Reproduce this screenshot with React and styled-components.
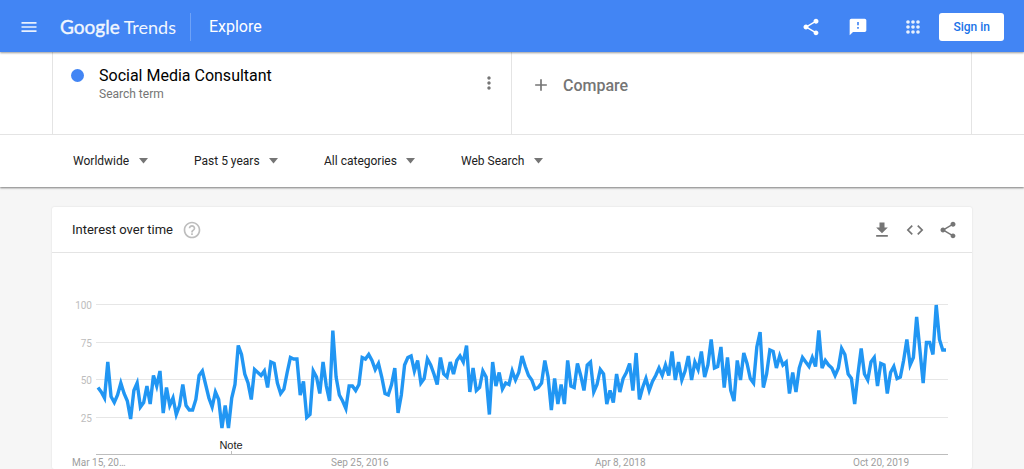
import React from 'react';
import styled, { createGlobalStyle } from 'styled-components';
import {
  MdAdd,
  MdCode,
  MdFeedback,
  MdFileDownload,
  MdHelpOutline,
  MdMenu,
  MdMoreVert,
  MdShare,
} from 'react-icons/md';

const GlobalStyle = createGlobalStyle`
  * {
    box-sizing: border-box;
  }
  body {
    margin: 0;
    background: #f6f6f6;
    color: #212121;
    font-family: Roboto, 'Liberation Sans', sans-serif;
  }
  button, select {
    font-family: inherit;
  }
`;

const Header = styled.header`
  position: relative;
  display: flex;
  align-items: center;
  height: 52px;
  padding: 2px 20px 0 19px;
  background: #4285f4;
  box-shadow: 0 1px 2px rgba(0, 0, 0, 0.4);
  color: #fff;
`;

const IconButton = styled.button`
  display: flex;
  padding: 0;
  border: 0;
  background: none;
  color: ${(props) => props.$color || '#757575'};
  font-size: 20px;
  cursor: pointer;
`;

const Logo = styled.a`
  display: flex;
  align-items: baseline;
  gap: 4px;
  margin-left: 21px;
  color: #f1f6fe;
  font-family: Lato, sans-serif;
  font-size: 18px;
  line-height: 28px;
  text-decoration: none;
`;

const LogoBrand = styled.span`
  font-size: 19px;
  -webkit-text-stroke: 0.4px #f1f6fe;
`;

const PageName = styled.h1`
  margin: 0 auto 0 14px;
  padding-left: 18px;
  border-left: 1px solid #6ea2f7;
  font-size: 16px;
  font-weight: 400;
  line-height: 28px;
`;

const HeaderActions = styled.div`
  display: flex;
  align-items: center;
  gap: 27px;
`;

const Account = styled.div`
  display: flex;
  align-items: center;
  gap: 16px;
  margin-left: 8px;
`;

const SignIn = styled.a`
  padding: 0 14px;
  border-radius: 3px;
  background: #fff;
  color: #1a73e8;
  font-size: 12px;
  font-weight: 500;
  line-height: 28px;
  text-decoration: none;
`;

const SearchPanel = styled.section`
  background: #fff;
  box-shadow: 0 1px 2px rgba(0, 0, 0, 0.5);
`;

const TermsBar = styled.div`
  padding: 0 52px;
  border-bottom: 1px solid #e4e4e4;
`;

const Terms = styled.div`
  display: grid;
  grid-template-columns: 1fr 1fr;
  height: 82px;
  border: solid #e4e4e4;
  border-width: 0 1px;
`;

const Term = styled.div`
  display: flex;
  align-items: flex-start;
  padding: 13px 12px 0 18px;
  border-right: 1px solid #e4e4e4;
`;

const TermDot = styled.span`
  width: 13px;
  height: 13px;
  margin: 4px 15px 0 0;
  border-radius: 50%;
  background: #4285f4;
`;

const TermText = styled.div`
  flex: 1;
`;

const TermName = styled.div`
  color: #000;
  font-size: 16px;
  line-height: 21px;
`;

const TermKind = styled.div`
  color: #757575;
  font-size: 12px;
  line-height: 17px;
`;

const TermMenu = styled(IconButton)`
  margin-top: 8px;
`;

const CompareButton = styled.button`
  display: flex;
  align-items: center;
  gap: 12px;
  padding: 0 0 16px 19px;
  border: 0;
  background: none;
  color: #757575;
  font-size: 16px;
  font-weight: 500;
  cursor: pointer;

  svg {
    font-size: 20px;
  }
`;

const Filters = styled.div`
  display: flex;
  gap: 46px;
  padding: 0 73px;
`;

const FilterBox = styled.label`
  display: grid;
  align-items: center;

  > * {
    grid-area: 1 / 1;
  }

  svg {
    justify-self: end;
    fill: #757575;
    pointer-events: none;
  }
`;

const FilterSelect = styled.select`
  height: 52px;
  padding: 0 18px 0 0;
  border: 0;
  background: none;
  appearance: none;
  color: #212121;
  font-size: 12px;
`;

const Card = styled.section`
  margin: 20px 52px 0;
  border-radius: 2px;
  background: #fff;
  box-shadow: 0 0 2px rgba(0, 0, 0, 0.12);
`;

const CardHeader = styled.div`
  display: flex;
  align-items: center;
  gap: 9px;
  height: 46px;
  padding: 0 14px 0 20px;
  border-bottom: 1px solid #e4e4e4;
`;

const CardTitle = styled.h2`
  margin: 0;
  font-size: 13px;
  font-weight: 400;
`;

const CardActions = styled.div`
  display: flex;
  gap: 13px;
  margin-left: auto;
`;

const ChartSvg = styled.svg`
  display: block;
  width: 100%;
`;

const AxisText = styled.text`
  fill: ${(props) => props.$color || '#bdbdbd'};
  font-size: 10px;
`;

const NoteText = styled.text`
  fill: #222;
  font-family: 'Liberation Sans', Arial, sans-serif;
  font-size: 11px;
`;

const filters = [
  { label: 'Location', value: 'Worldwide' },
  { label: 'Time range', value: 'Past 5 years' },
  { label: 'Category', value: 'All categories' },
  { label: 'Search type', value: 'Web Search' },
];

// one value per week
const interest = [
  45, 42, 38, 62, 39, 35, 40, 48, 41, 36, 24, 43, 48, 32, 35, 46, 34, 53, 46,
  56, 28, 45, 33, 38, 27, 33, 47, 33, 30, 30, 37, 53, 56, 47, 38, 32, 42, 37,
  18, 33, 18, 38, 47, 73, 67, 54, 48, 37, 57, 55, 53, 56, 45, 62, 61, 48, 41,
  44, 55, 65, 64, 64, 40, 49, 25, 27, 56, 52, 41, 62, 46, 36, 83, 52, 40, 36,
  31, 46, 46, 43, 47, 65, 64, 67, 63, 57, 61, 52, 41, 40, 47, 58, 28, 40, 60,
  65, 66, 56, 63, 48, 51, 64, 60, 54, 47, 65, 54, 52, 62, 54, 63, 66, 62, 73,
  42, 58, 43, 45, 56, 52, 27, 62, 46, 55, 44, 48, 47, 56, 50, 55, 66, 59, 53,
  50, 44, 45, 48, 63, 52, 30, 51, 34, 47, 34, 63, 46, 45, 61, 53, 43, 60, 62,
  42, 47, 57, 54, 34, 43, 35, 54, 42, 51, 55, 61, 43, 68, 37, 45, 51, 43, 49,
  53, 58, 53, 60, 53, 69, 50, 62, 50, 56, 66, 50, 62, 57, 69, 52, 60, 77, 58,
  59, 72, 45, 65, 43, 36, 63, 50, 68, 61, 51, 48, 72, 82, 45, 54, 70, 69, 58,
  66, 60, 62, 41, 55, 42, 58, 65, 62, 59, 65, 59, 83, 58, 63, 60, 58, 53, 58,
  71, 67, 54, 51, 34, 54, 71, 54, 50, 62, 65, 46, 61, 60, 41, 55, 59, 51, 52,
  63, 77, 60, 65, 92, 70, 48, 75, 75, 67, 100, 77, 70, 70,
];

const dates = [
  { x: 20, text: 'Mar 15, 20…' },
  { x: 279, text: 'Sep 25, 2016' },
  { x: 543, text: 'Apr 8, 2018' },
  { x: 801, text: 'Oct 20, 2019' },
];

const levels = [100, 75, 50, 25];

const chartX = (index) => 46 + (index * 848) / (interest.length - 1);
const chartY = (value) => 202 - value * 1.5;

const AppsIcon = () => (
  <svg width="20" height="20" viewBox="0 0 24 24" fill="currentColor">
    {[6, 12, 18].map((y) =>
      [6, 12, 18].map((x) => <circle key={x + '-' + y} cx={x} cy={y} r="2.2" />)
    )}
  </svg>
);

const Filter = (props) => (
  <FilterBox>
    <FilterSelect aria-label={props.label}>
      <option>{props.value}</option>
    </FilterSelect>
    <svg width="9" height="6" viewBox="0 0 9 6">
      <path d="M0 0h9L4.500 5.500z" />
    </svg>
  </FilterBox>
);

const Chart = () => (
  <ChartSvg viewBox="0 0 920 216" role="img" aria-label="Interest over time">
    {levels.map((level) => {
      const y = Math.ceil(chartY(level)) - 1;
      return (
        <g key={level}>
          <path d={`M44 ${y}.5H896`} stroke="#e6e6e6" />
          <AxisText x="40" y={y + 5} textAnchor="end">
            {level}
          </AxisText>
        </g>
      );
    })}
    <path d="M44 201.5H896" stroke="#bdbdbd" />
    <path d="M179.5 198v3" stroke="#bdbdbd" />
    <polyline
      points={interest.map((v, i) => `${chartX(i)},${chartY(v)}`).join(' ')}
      fill="none"
      stroke="#2196f3"
      strokeWidth="3.4"
    />
    <NoteText x="179" y="196" textAnchor="middle">
      Note
    </NoteText>
    {dates.map((date) => (
      <AxisText key={date.text} x={date.x} y="213" $color="#9e9e9e">
        {date.text}
      </AxisText>
    ))}
  </ChartSvg>
);

const App = () => {
  return (
    <>
      <GlobalStyle />
      <Header>
        <IconButton $color="#e9f1fe" aria-label="Main menu">
          <MdMenu />
        </IconButton>
        <Logo href="#home">
          <LogoBrand>Google</LogoBrand>
          <span>Trends</span>
        </Logo>
        <PageName>Explore</PageName>
        <HeaderActions>
          <IconButton $color="#fff" aria-label="Share">
            <MdShare />
          </IconButton>
          <IconButton $color="#fff" aria-label="Send feedback">
            <MdFeedback />
          </IconButton>
          <Account>
            <IconButton $color="#e9f1fe" aria-label="Apps">
              <AppsIcon />
            </IconButton>
            <SignIn href="#signin">Sign in</SignIn>
          </Account>
        </HeaderActions>
      </Header>
      <main>
        <SearchPanel>
          <TermsBar>
            <Terms>
              <Term>
                <TermDot />
                <TermText>
                  <TermName>Social Media Consultant</TermName>
                  <TermKind>Search term</TermKind>
                </TermText>
                <TermMenu aria-label="More options">
                  <MdMoreVert />
                </TermMenu>
              </Term>
              <CompareButton>
                <MdAdd />
                Compare
              </CompareButton>
            </Terms>
          </TermsBar>
          <Filters>
            {filters.map((filter) => (
              <Filter key={filter.label} {...filter} />
            ))}
          </Filters>
        </SearchPanel>
        <Card>
          <CardHeader>
            <CardTitle>Interest over time</CardTitle>
            <IconButton $color="#bdbdbd" aria-label="Help">
              <MdHelpOutline />
            </IconButton>
            <CardActions>
              <IconButton aria-label="Download">
                <MdFileDownload />
              </IconButton>
              <IconButton aria-label="Embed">
                <MdCode />
              </IconButton>
              <IconButton aria-label="Share chart">
                <MdShare />
              </IconButton>
            </CardActions>
          </CardHeader>
          <Chart />
        </Card>
      </main>
    </>
  );
};

export default App;
